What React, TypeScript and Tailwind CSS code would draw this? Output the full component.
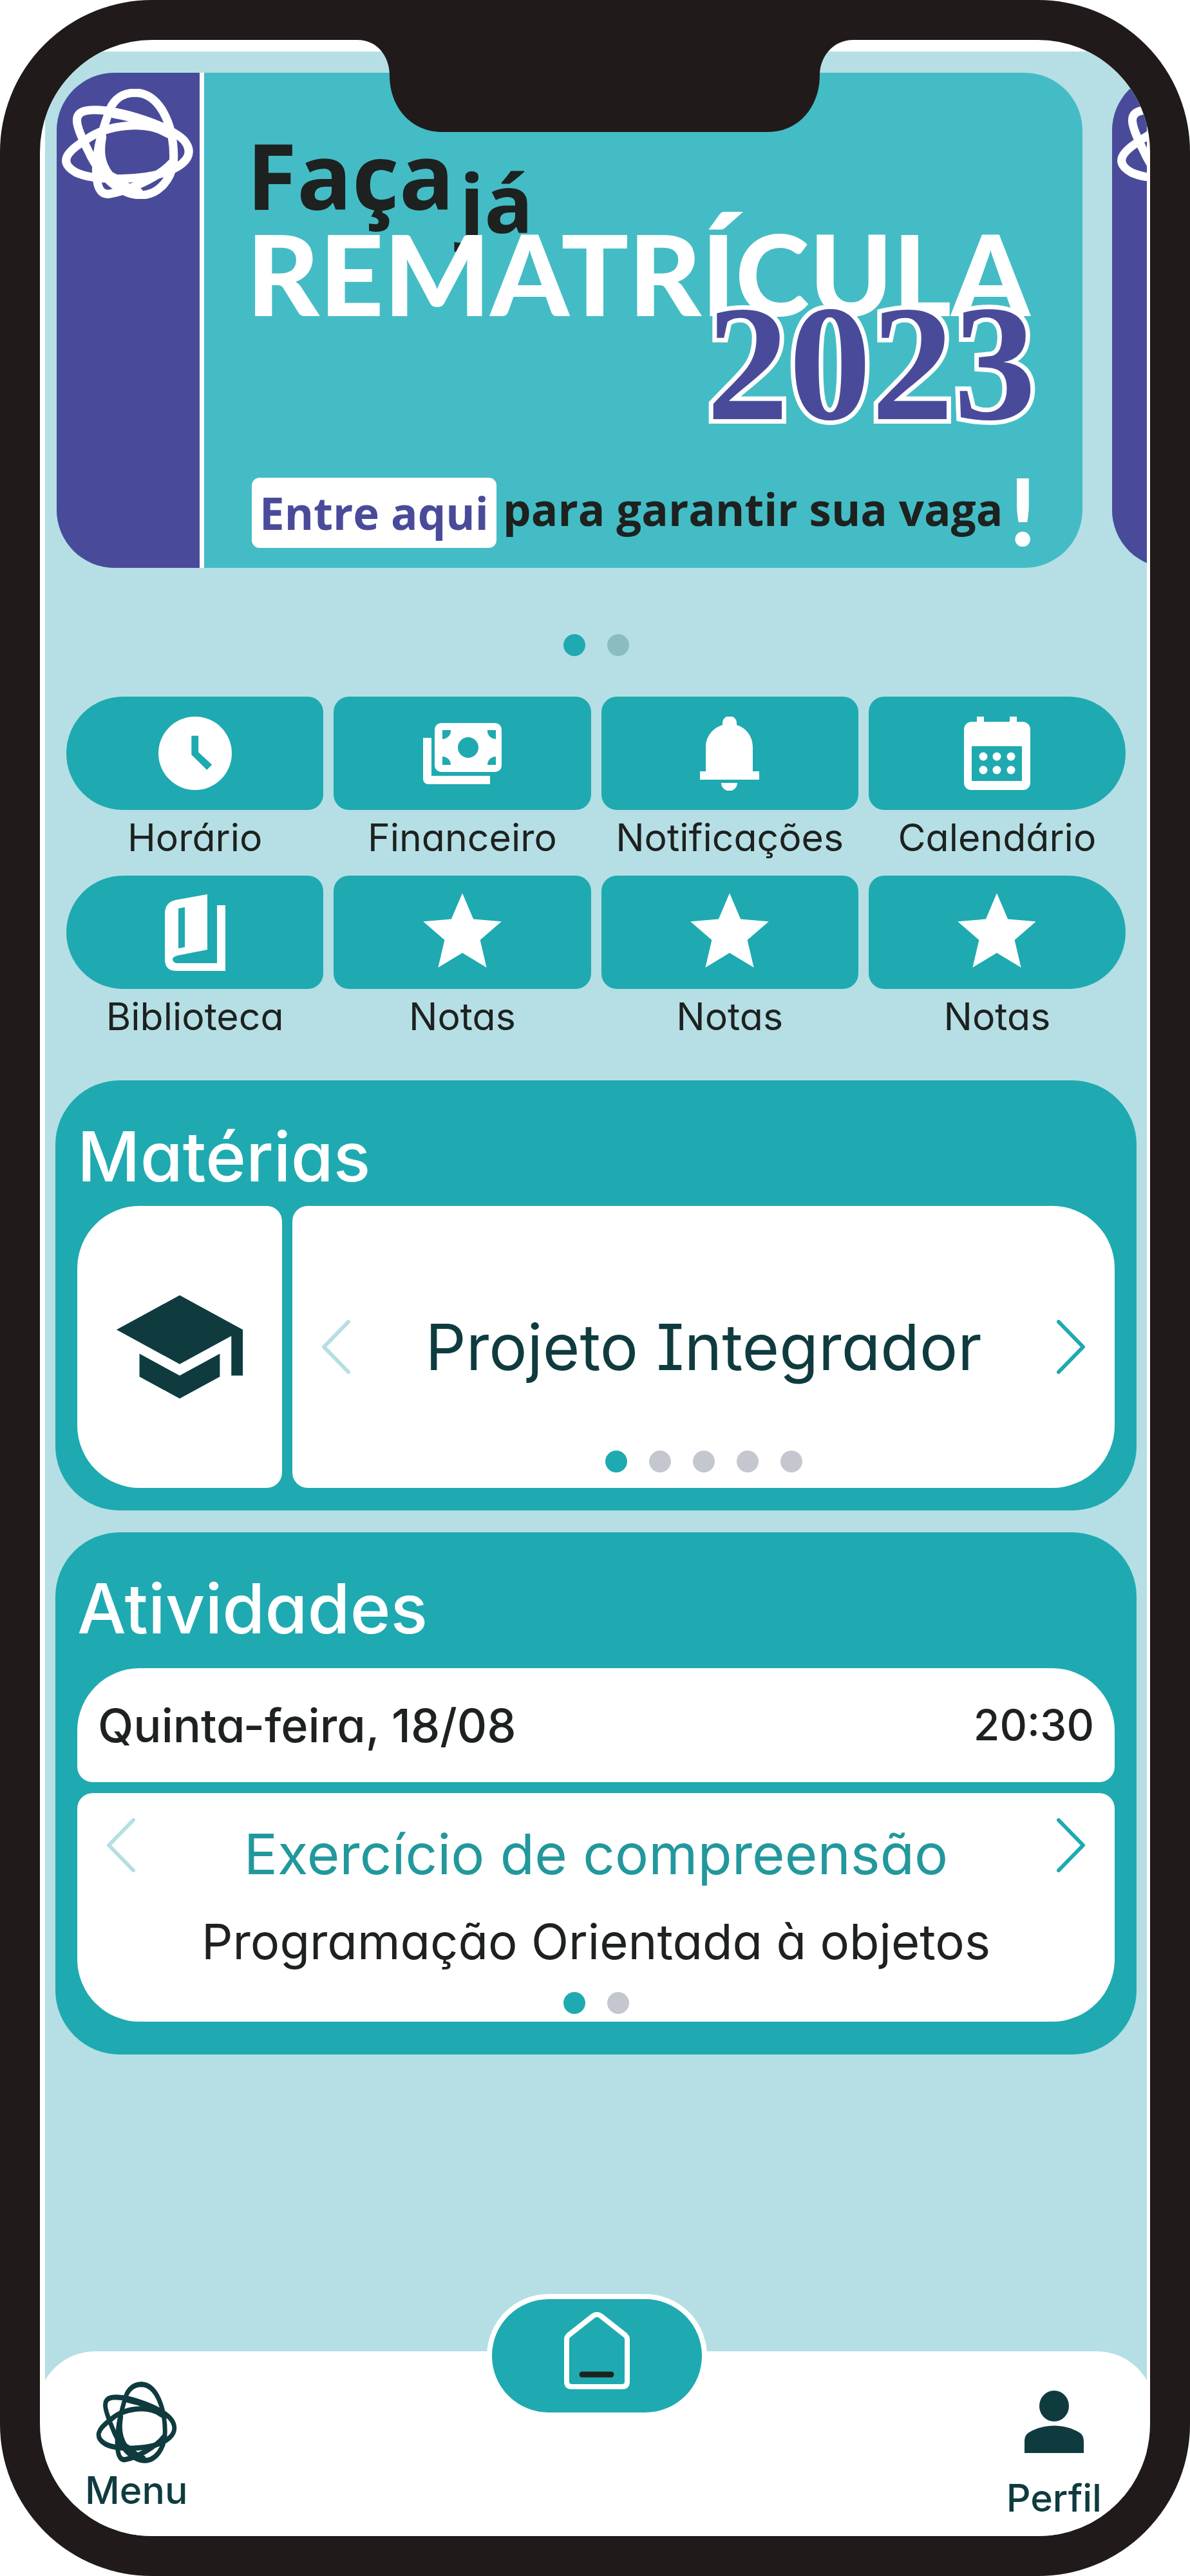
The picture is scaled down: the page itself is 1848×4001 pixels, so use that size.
import React from "react";
import { MdSchool, MdStar } from "react-icons/md";

function OrbitLogo({ className, stroke = 12 }: { className: string; stroke?: number }) {
  return (
    <svg viewBox="0 0 202 171" preserveAspectRatio="none" fill="none" stroke="currentColor" strokeWidth={stroke} strokeLinecap="round" className={className} aria-hidden="true">
      <path d="M113 6C150 6 172 55 172 105C172 140 148 165 122 165C88 165 56 132 40 95C20 55 14 35 44 33C84 30 168 58 188 80C204 100 192 116 166 127C130 142 52 144 22 130C-3 116 3 100 36 80C70 54 130 50 160 68" />
      <path d="M113 6C88 6 76 22 71 40C58 78 53 100 53 125C53 150 58 166 74 163C104 158 150 136 168 116" />
      <path d="M62 75C56 105 62 130 92 152M80 39C110 44 145 56 164 70M66 132C90 138 96 156 118 160" />
    </svg>
  );
}

function ClockIcon() {
  return (
    <svg viewBox="2 2 20 20" className="size-[114px]" fill="currentColor" fillRule="evenodd" aria-hidden="true">
      <path d="M12 2a10 10 0 1 0 0 20a10 10 0 0 0 0-20zM11 7.2h1.9v4.5l3.7 3.4l-1.4 1.4L11 12.4z" />
    </svg>
  );
}

function CashIcon() {
  return (
    <svg viewBox="0 0 122 95" className="h-[95px] w-[122px]" fill="currentColor" fillRule="evenodd" aria-hidden="true">
      <path d="M0 23h13v59h91v13H8a8 8 0 0 1-8-8z" />
      <path d="M28 0h84a10 10 0 0 1 10 10v56a10 10 0 0 1-10 10H28a10 10 0 0 1-10-10V10A10 10 0 0 1 28 0zM70 22a16 16 0 1 0 0 32a16 16 0 0 0 0-32zM30 11v14a13 13 0 0 0 13-14zM113 11h-13a13 13 0 0 0 13 14zM30 65v-13a13 13 0 0 1 13 13zM113 65v-13a13 13 0 0 0-13 13z" />
    </svg>
  );
}

function BellIcon() {
  return (
    <svg viewBox="0 0 92 115" className="h-[115px] w-[92px]" fill="currentColor" aria-hidden="true">
      <path d="M35 13V10a11 11 0 0 1 22 0v3C73 18 82 32 82 47v38h10v13H0V85h9V47C9 32 19 18 35 13z" />
      <path d="M33 103h25a12 12 0 0 1-25 0z" />
    </svg>
  );
}

function CalendarIcon() {
  return (
    <svg viewBox="0 0 103 114" className="h-[114px] w-[103px]" fill="currentColor" fillRule="evenodd" aria-hidden="true">
      <path d="M20 0h11v8h40V0h11v8h9a12 12 0 0 1 12 12v83a11 11 0 0 1-11 11H11a11 11 0 0 1-11-11V20A12 12 0 0 1 12 8h8zM12 46v54h78V46z" />
      {[30, 51, 73].map((x) => (
        <g key={x}>
          <circle cx={x} cy="62" r="6.5" />
          <circle cx={x} cy="83" r="6.5" />
        </g>
      ))}
    </svg>
  );
}

function BookIcon() {
  return (
    <svg viewBox="0 0 94 119" className="h-[119px] w-[94px]" fill="currentColor" fillRule="evenodd" aria-hidden="true">
      <path d="M66 0V86L20 95Q12 97 12 101Q13 107 20 107H81V17H94V119H18Q0 119 0 101V30Q0 13 16 9ZM21 22V84L31 82V20Z" />
    </svg>
  );
}

function HomeIcon() {
  return (
    <svg viewBox="0 0 102 120" className="h-[120px] w-[102px]" fill="none" strokeLinecap="round" strokeLinejoin="round" aria-hidden="true">
      <path d="M4 42Q4 39 7 36L45 6Q51 2 57 6L95 36Q98 39 98 42V108Q98 116 90 116H12Q4 116 4 108Z" stroke="#fff" strokeWidth="8" />
      <path d="M28 97H73" stroke="#1d211f" strokeWidth="9" />
    </svg>
  );
}

function PersonIcon() {
  return (
    <svg viewBox="0 0 92 97" className="h-[97px] w-[92px]" fill="currentColor" aria-hidden="true">
      <ellipse cx="46" cy="24" rx="23" ry="24" />
      <path d="M0 97V80C0 72 2 68 7 65C30 51 62 51 85 65C90 68 92 72 92 80V97Z" />
    </svg>
  );
}

function Chevron({ side, label }: { side: "left" | "right"; label: string }) {
  return (
    <button aria-label={label} className={side === "left" ? "shrink-0 text-[#b5dfe4]" : "shrink-0 text-[#1eaab0]"}>
      <svg viewBox="0 0 45 84" className="h-[84px] w-[45px]" fill="none" stroke="currentColor" strokeWidth="6" strokeLinecap="round" strokeLinejoin="round" aria-hidden="true">
        <path d={side === "left" ? "M42 3L4 42L42 81" : "M3 3L41 42L3 81"} />
      </svg>
    </button>
  );
}

function Dots({ count, idle }: { count: number; idle: string }) {
  return (
    <div className="flex justify-center gap-[34px]">
      {Array.from({ length: count }, (_, i) => (
        <button key={i} aria-label={`Página ${i + 1}`} className={`size-[34px] rounded-full ${i === 0 ? "bg-[#1eaab0]" : idle}`} />
      ))}
    </div>
  );
}

function Stripe() {
  return (
    <div className="w-[229px] shrink-0 border-r-[7px] border-white bg-[#494b9a] pt-[25px] pl-2 text-white">
      <OrbitLogo className="h-[171px] w-[204px]" stroke={13} />
    </div>
  );
}

function Banner() {
  return (
    <article className="flex w-[calc(100%-100px)] shrink-0 overflow-hidden rounded-[90px] bg-[#44bcc5]">
      <Stripe />
      <div className="flex-1 pt-[88px] pr-[72px] pb-[31px] pl-[66px] font-['Open_Sans',sans-serif] font-bold">
        <div className="flex h-[140px] items-start gap-2 text-[#1d211f]">
          <span className="text-[142px] leading-[140px]">Faça</span>
          <span className="pt-[42px] text-[126px] leading-[140px]">já</span>
        </div>
        <h1 className="relative mt-[21px] font-['Lato',sans-serif] text-[174px] leading-[124px] font-black whitespace-nowrap text-white">REMATRÍCULA</h1>
        <p className="relative -mt-[11px] text-right font-['Liberation_Serif',serif] text-[256px] leading-[180px] text-[#494b9a] [-webkit-text-stroke:14px_white] [paint-order:stroke_fill]">2023</p>
        <div className="mt-[87px] ml-2 flex h-[109px] items-center justify-between whitespace-nowrap">
          <button className="h-full rounded-[12px] bg-white px-3 text-[69px] text-[#494b9a]">Entre aqui</button>
          <span className="pb-[14px] text-[69px] leading-[90px] text-[#1d211f]">para garantir sua vaga</span>
          <span className="pb-2 font-['Lato',sans-serif] text-[144px] leading-[109px] font-black text-white">!</span>
        </div>
      </div>
    </article>
  );
}

const shortcuts = [
  { label: "Horário", icon: <ClockIcon /> },
  { label: "Financeiro", icon: <CashIcon /> },
  { label: "Notificações", icon: <BellIcon /> },
  { label: "Calendário", icon: <CalendarIcon /> },
  { label: "Biblioteca", icon: <BookIcon /> },
  { label: "Notas", icon: <MdStar className="size-[146px]" /> },
  { label: "Notas", icon: <MdStar className="size-[146px]" /> },
  { label: "Notas", icon: <MdStar className="size-[146px]" /> },
];

function Shortcuts() {
  return (
    <nav aria-label="Atalhos" className="mx-[33px] mt-[63px] grid grid-cols-4 gap-x-4 gap-y-6">
      {shortcuts.map(({ label, icon }, i) => (
        <a key={i} href="#" className="flex flex-col gap-2 text-center">
          <span className={`flex h-[176px] items-center justify-center bg-[#1eaab0] text-white ${i % 4 === 0 ? "rounded-l-[88px] rounded-r-3xl" : i % 4 === 3 ? "rounded-l-3xl rounded-r-[88px]" : "rounded-3xl"}`}>
            {icon}
          </span>
          <span className="text-[59px] leading-[70px] text-[#1d211f]">{label}</span>
        </a>
      ))}
    </nav>
  );
}

export default function App() {
  return (
    <div className="min-h-screen bg-white font-['Inter',sans-serif] [font-feature-settings:'cv11','cv08']">
      <div className="relative flex min-h-screen flex-col overflow-hidden rounded-[236px] border-[62px] border-[#211a1a] bg-white pt-[18px] pr-[5px] pl-2">
        <svg viewBox="0 0 770 144" className="absolute -top-px left-[calc(50%+16px)] z-20 h-[144px] w-[770px] -translate-x-1/2" fill="#211a1a" aria-hidden="true">
          <path d="M0 0V1C32 1 50 28 50 56C50 104 82 144 132 144H638C686 144 718 104 718 56C718 28 738 1 770 1V0Z" />
        </svg>
        <div className="flex flex-1 flex-col overflow-hidden bg-[#b5dfe4]">
          <main className="flex flex-1 flex-col pb-[120px]">
            <section aria-label="Destaques" className="flex gap-[46px] overflow-hidden pt-[33px] pl-[18px]">
              <Banner />
              <article className="flex w-[calc(100%-100px)] shrink-0 overflow-hidden rounded-[90px] bg-[#44bcc5]">
                <Stripe />
              </article>
            </section>
            <div className="mt-[103px]">
              <Dots count={2} idle="bg-[#8bbcc0]" />
            </div>
            <Shortcuts />

            <section className="mx-4 mt-16 rounded-[100px] bg-[#1eaab0] px-[34px] pt-[58px] pb-[35px]">
              <h2 className="text-[107px] leading-[120px] font-medium text-white">Matérias</h2>
              <div className="mt-[17px] flex h-[438px] gap-4">
                <div className="flex w-[318px] shrink-0 items-center justify-center rounded-l-[97px] rounded-r-3xl bg-white text-[#0f3b3f]">
                  <MdSchool className="size-[214px]" />
                </div>
                <div className="flex flex-1 flex-col rounded-l-3xl rounded-r-[97px] bg-white px-[45px] pt-[58px] pb-6">
                  <div className="flex flex-1 items-center justify-between">
                    <Chevron side="left" label="Matéria anterior" />
                    <a href="#" className="text-[99px] leading-[116px] text-[#0f3b3f]">Projeto Integrador</a>
                    <Chevron side="right" label="Próxima matéria" />
                  </div>
                  <Dots count={5} idle="bg-[#c4c7cf]" />
                </div>
              </div>
            </section>

            <section className="mx-4 mt-[34px] rounded-[100px] bg-[#1eaab0] px-[34px] pt-[58px] pb-[51px]">
              <h2 className="text-[107px] leading-[120px] font-medium text-white">Atividades</h2>
              <div className="mt-[33px] flex h-[177px] items-center justify-between rounded-t-[97px] rounded-b-3xl bg-white px-8 font-medium text-[#1d211f]">
                <span className="text-[72px]">Quinta-feira, 18/08</span>
                <time className="text-[66px]">20:30</time>
              </div>
              <div className="mt-[17px] rounded-t-3xl rounded-b-[97px] bg-white px-[45px] pt-[39px] pb-3">
                <div className="flex items-start justify-between">
                  <Chevron side="left" label="Atividade anterior" />
                  <a href="#" className="pt-1.5 text-[87px] leading-[100px] text-[#22989c]">Exercício de compreensão</a>
                  <Chevron side="right" label="Próxima atividade" />
                </div>
                <p className="mt-10 mb-[34px] text-center text-[76px] leading-[90px] text-[#1d211f]">Programação Orientada à objetos</p>
                <Dots count={2} idle="bg-[#c4c7cf]" />
              </div>
            </section>
          </main>

          <nav aria-label="Principal" className="-mx-3 flex h-[287px] items-start justify-between rounded-t-[90px] bg-white pr-[82px] pl-[74px] text-[59px] leading-[68px] font-medium text-[#0f3b3f]">
            <a href="#" className="flex flex-col items-center gap-2 pt-[47px]">
              <OrbitLogo className="h-[127px] w-[126px]" stroke={11} />
              Menu
            </a>
            <a href="#" aria-label="Início" className="-mt-[89px] flex items-center justify-center rounded-full border-8 border-white bg-[#1eaab0] px-[112px] pt-5 pb-9">
              <HomeIcon />
            </a>
            <a href="#" className="flex flex-col items-center gap-9 pt-[61px]">
              <PersonIcon />
              Perfil
            </a>
          </nav>
        </div>
      </div>
    </div>
  );
}
